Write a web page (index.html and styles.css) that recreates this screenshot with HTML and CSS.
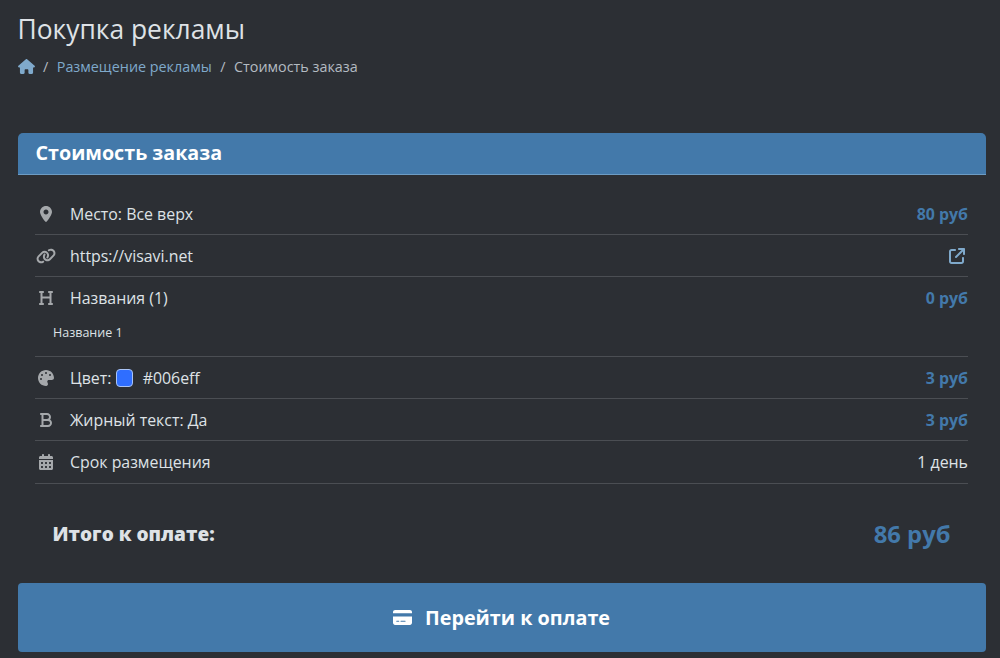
FILE: index.html
```html
<!DOCTYPE html>
<html lang="ru">
<head>
    <meta charset="utf-8">
    <title>Покупка рекламы</title>
    <link rel="stylesheet" href="styles.css">
</head>
<body>
<main>
    <h1>Покупка рекламы</h1>
    <nav class="crumbs">
        <a href="#" class="crumb-home">
            <svg viewBox="0 0 576 512"><path d="M575.8 255.5c0 18-15 32.1-32 32.1h-32l.7 160.2c0 2.7-.2 5.4-.5 8.1V472c0 22.1-17.9 40-40 40H456c-1.1 0-2.2 0-3.3-.1c-1.4 .1-2.8 .1-4.2 .1H416 392c-22.1 0-40-17.9-40-40V448 384c0-17.7-14.3-32-32-32H256c-17.7 0-32 14.3-32 32v64 24c0 22.1-17.9 40-40 40H160 128.1c-1.5 0-3-.1-4.5-.2c-1.2 .1-2.4 .2-3.6 .2H104c-22.1 0-40-17.9-40-40V360c0-.9 0-1.9 .1-2.8V287.6H32c-18 0-32-14-32-32.1c0-9 3-17 10-24L266.4 8c7-7 15-8 22-8s15 2 21 7L564.8 231.5c8 7 12 15 11 24z"/></svg>
        </a>
        <span class="sep">/</span>
        <a href="#">Размещение рекламы</a>
        <span class="sep">/</span>
        <span>Стоимость заказа</span>
    </nav>

    <section class="card">
        <h2 class="card-head">Стоимость заказа</h2>
        <ul class="rows">
            <li class="row">
                <span class="ico"><svg viewBox="0 0 384 512"><path fill-rule="evenodd" d="M215.7 499.2C267 435 384 279.4 384 192C384 86 298 0 192 0S0 86 0 192c0 87.4 117 243 168.3 307.2c12.3 15.3 35.1 15.3 47.4 0zM192 272c44.2 0 80-35.8 80-80s-35.8-80-80-80s-80 35.8-80 80s35.8 80 80 80z"/></svg></span>
                <span class="label">Место: Все верх</span>
                <strong class="price">80 руб</strong>
            </li>
            <li class="row">
                <span class="ico"><svg viewBox="0 0 640 512"><path d="M579.8 267.7c56.5-56.5 56.5-148 0-204.5c-50-50-128.8-56.5-186.3-15.4l-1.6 1.1c-14.4 10.3-17.7 30.3-7.4 44.6s30.3 17.7 44.6 7.4l1.6-1.1c32.1-22.9 76-19.3 103.8 8.6c31.5 31.5 31.5 82.5 0 114L422.3 334.8c-31.5 31.5-82.5 31.5-114 0c-27.9-27.9-31.5-71.8-8.6-103.8l1.1-1.6c10.3-14.4 6.9-34.4-7.4-44.6s-34.4-6.9-44.6 7.4l-1.1 1.6C206.5 251.2 213 330 263 380c56.5 56.5 148 56.5 204.5 0L579.8 267.7zM60.2 244.3c-56.5 56.5-56.5 148 0 204.5c50 50 128.8 56.5 186.3 15.4l1.6-1.1c14.4-10.3 17.7-30.3 7.4-44.6s-30.3-17.7-44.6-7.4l-1.6 1.1c-32.1 22.9-76 19.3-103.8-8.6C74 372 74 321 105.5 289.5L217.7 177.2c31.5-31.5 82.5-31.5 114 0c27.9 27.9 31.5 71.8 8.6 103.9l-1.1 1.6c-10.3 14.4-6.9 34.4 7.4 44.6s34.4 6.9 44.6-7.4l1.1-1.6C433.5 260.8 427 182 377 132c-56.5-56.5-148-56.5-204.5 0L60.2 244.3z"/></svg></span>
                <span class="label">https://visavi.net</span>
                <a href="#" class="ext">
                    <svg viewBox="0 0 512 512"><path d="M320 0c-17.7 0-32 14.3-32 32s14.3 32 32 32h82.7L201.4 265.4c-12.5 12.5-12.5 32.8 0 45.3s32.8 12.5 45.3 0L448 109.3V192c0 17.7 14.3 32 32 32s32-14.3 32-32V32c0-17.7-14.3-32-32-32H320zM80 32C35.8 32 0 67.8 0 112V432c0 44.2 35.8 80 80 80H400c44.2 0 80-35.8 80-80V320c0-17.7-14.3-32-32-32s-32 14.3-32 32V432c0 8.8-7.2 16-16 16H80c-8.8 0-16-7.2-16-16V112c0-8.8 7.2-16 16-16H192c17.7 0 32-14.3 32-32s-14.3-32-32-32H80z"/></svg>
                </a>
            </li>
            <li class="row row-names">
                <div class="row-main">
                    <span class="ico"><svg viewBox="0 0 448 512"><path d="M0 64C0 46.3 14.3 32 32 32H80h48c17.7 0 32 14.3 32 32s-14.3 32-32 32H112V208H336V96H320c-17.7 0-32-14.3-32-32s14.3-32 32-32h48 48c17.7 0 32 14.3 32 32s-14.3 32-32 32H400V240 416h16c17.7 0 32 14.3 32 32s-14.3 32-32 32H368 320c-17.7 0-32-14.3-32-32s14.3-32 32-32h16V272H112V416h16c17.7 0 32 14.3 32 32s-14.3 32-32 32H80 32c-17.7 0-32-14.3-32-32s14.3-32 32-32H48V240 96H32C14.3 96 0 81.7 0 64z"/></svg></span>
                    <span class="label">Названия (1)</span>
                    <strong class="price">0 руб</strong>
                </div>
                <div class="sub">Название 1</div>
            </li>
            <li class="row">
                <span class="ico"><svg viewBox="0 0 512 512"><path d="M512 256c0 .9 0 1.8 0 2.7c-.4 36.5-33.6 61.3-70.1 61.3H344c-26.5 0-48 21.5-48 48c0 3.4 .4 6.7 1 9.9c2.1 10.2 6.5 20 10.8 29.9c6.1 13.8 12.1 27.5 12.1 42c0 31.8-21.6 60.7-53.4 62c-3.5 .1-7 .2-10.6 .2C114.6 512 0 397.4 0 256S114.6 0 256 0S512 114.6 512 256zM128 288a32 32 0 1 0 -64 0 32 32 0 1 0 64 0zm0-96a32 32 0 1 0 0-64 32 32 0 1 0 0 64zM288 96a32 32 0 1 0 -64 0 32 32 0 1 0 64 0zm96 96a32 32 0 1 0 0-64 32 32 0 1 0 0 64z"/></svg></span>
                <span class="label">Цвет: <i class="swatch"></i> #006eff</span>
                <strong class="price">3 руб</strong>
            </li>
            <li class="row">
                <span class="ico"><svg viewBox="0 0 384 512"><path d="M0 64C0 46.3 14.3 32 32 32H80 96 224c70.7 0 128 57.3 128 128c0 31.3-11.3 60.1-30 82.3c37.1 22.4 62 63.1 62 109.7c0 70.7-57.3 128-128 128H96 80 32c-17.7 0-32-14.3-32-32s14.3-32 32-32H48V256 96H32C14.3 96 0 81.7 0 64zM224 224c35.3 0 64-28.7 64-64s-28.7-64-64-64H112V224H224zM112 288V416H256c35.3 0 64-28.7 64-64s-28.7-64-64-64H224 112z"/></svg></span>
                <span class="label">Жирный текст: Да</span>
                <strong class="price">3 руб</strong>
            </li>
            <li class="row">
                <span class="ico"><svg viewBox="0 0 448 512"><path d="M128 0c17.7 0 32 14.3 32 32V64H288V32c0-17.7 14.3-32 32-32s32 14.3 32 32V64h48c26.5 0 48 21.5 48 48v48H0V112C0 85.5 21.5 64 48 64H96V32c0-17.7 14.3-32 32-32zM0 192H448V464c0 26.5-21.5 48-48 48H48c-26.5 0-48-21.5-48-48V192zm64 80v32c0 8.8 7.2 16 16 16h32c8.8 0 16-7.2 16-16V272c0-8.8-7.2-16-16-16H80c-8.8 0-16 7.2-16 16zm128 0v32c0 8.8 7.2 16 16 16h32c8.8 0 16-7.2 16-16V272c0-8.8-7.2-16-16-16H208c-8.8 0-16 7.2-16 16zm144-16c-8.8 0-16 7.2-16 16v32c0 8.8 7.2 16 16 16h32c8.8 0 16-7.2 16-16V272c0-8.8-7.2-16-16-16H336zM64 400v32c0 8.8 7.2 16 16 16h32c8.8 0 16-7.2 16-16V400c0-8.8-7.2-16-16-16H80c-8.8 0-16 7.2-16 16zm144-16c-8.8 0-16 7.2-16 16v32c0 8.8 7.2 16 16 16h32c8.8 0 16-7.2 16-16V400c0-8.8-7.2-16-16-16H208zm112 16v32c0 8.8 7.2 16 16 16h32c8.8 0 16-7.2 16-16V400c0-8.8-7.2-16-16-16H336c-8.8 0-16 7.2-16 16z"/></svg></span>
                <span class="label">Срок размещения</span>
                <span class="term">1 день</span>
            </li>
        </ul>
        <div class="total">
            <strong>Итого к оплате:</strong>
            <strong class="total-sum">86 руб</strong>
        </div>
    </section>

    <button class="pay">
        <svg viewBox="0 0 576 512"><path d="M64 32C28.7 32 0 60.7 0 96v32H576V96c0-35.3-28.7-64-64-64H64zM576 224H0V416c0 35.3 28.7 64 64 64H512c35.3 0 64-28.7 64-64V224zM112 352h64c8.8 0 16 7.2 16 16s-7.2 16-16 16H112c-8.8 0-16-7.2-16-16s7.2-16 16-16zm112 16c0-8.8 7.2-16 16-16H368c8.8 0 16 7.2 16 16s-7.2 16-16 16H240c-8.8 0-16-7.2-16-16z"/></svg>
        Перейти к оплате
    </button>
</main>
</body>
</html>
```

FILE: styles.css
```css
* {
    margin: 0;
    padding: 0;
    box-sizing: border-box;
}

html, body {
    height: 100%;
    overflow: hidden;
}

body {
    background: #2c2f34;
    color: #dee2e6;
    font: normal 15.9px "Open Sans", "Noto Sans", sans-serif;
}

a {
    color: #7fa9cb;
    text-decoration: none;
}

svg {
    display: block;
    fill: currentColor;
}

main {
    padding: 11px 14.5px 0 17.5px;
}

h1 {
    font-size: 26.4px;
    font-weight: 400;
    line-height: 36px;
}

.crumbs {
    display: flex;
    align-items: center;
    height: 20px;
    margin-top: 9px;
    font-size: 14.35px;
    color: #b4bbc2;
}

.crumb-home svg {
    width: 17px;
    height: 15px;
}

.sep {
    margin: 0 8.5px;
}

.card {
    margin-top: 57px;
}

.card-head {
    height: 42px;
    padding: 0 18px;
    background: #4379aa;
    border-bottom: 1px solid #6d9cc4;
    border-radius: 5px 5px 0 0;
    color: #fff;
    font-size: 19.7px;
    font-weight: 700;
    line-height: 40px;
}

.rows {
    list-style: none;
    margin: 18px 17.5px 0;
}

.row, .row-main {
    display: flex;
    align-items: center;
}

.row {
    height: 42px;
    border-bottom: 1px solid #4b4e53;
}

.row:last-child {
    height: 43px;
}

.row-names {
    display: block;
    height: 80px;
}

.row-main {
    height: 42px;
}

.ico {
    display: flex;
    justify-content: center;
    flex: none;
    width: 22px;
    margin-right: 13px;
    color: #a5a8ab;
}

.ico svg {
    height: 16px;
}

.label {
    display: flex;
    align-items: center;
    flex: 1;
    white-space: pre;
}

.price {
    color: #4379aa;
    font-weight: 700;
}

.ext {
    margin-right: 3px;
    color: #7fa9cb;
}

.ext svg {
    width: 16px;
    height: 16px;
}

.sub {
    padding: 6px 0 0 18px;
    font-size: 12.5px;
    line-height: 16px;
}

.swatch {
    display: block;
    width: 17px;
    height: 18px;
    margin: 0 6px 0 0;
    background: #2f6eff;
    border: 1px solid #aac4f5;
    border-radius: 4px;
}

.total {
    display: flex;
    justify-content: space-between;
    align-items: center;
    height: 99px;
    padding: 0 35px;
    font-size: 19px;
    font-weight: 600;
}

.total-sum {
    color: #4379aa;
    font-size: 23.8px;
    font-weight: 700;
}

.pay {
    display: flex;
    justify-content: center;
    align-items: center;
    gap: 13px;
    width: 100%;
    height: 69px;
    background: #4379aa;
    border: 0;
    border-radius: 4px;
    color: #fff;
    font: 700 19.8px "Open Sans", "Noto Sans", sans-serif;
}

.pay svg {
    width: 19px;
    height: 17px;
}
```
